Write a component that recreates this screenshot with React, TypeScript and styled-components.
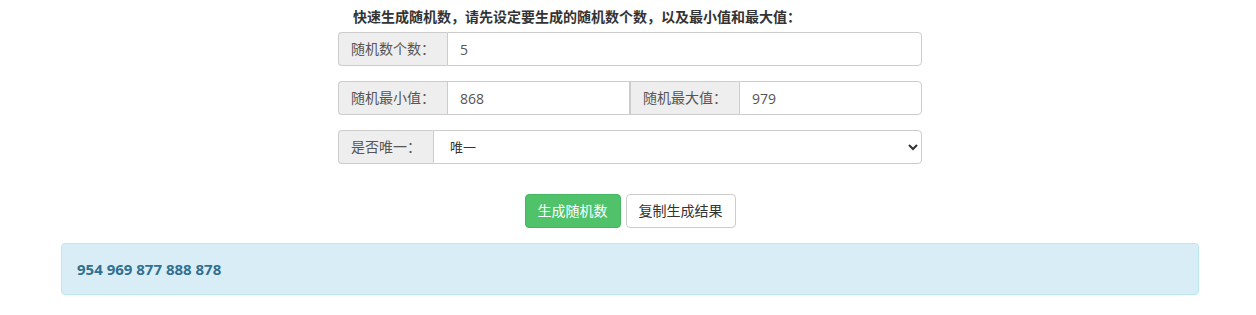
import styled, { createGlobalStyle } from "styled-components";
import { useState } from "react";

const GlobalStyle = createGlobalStyle`
    body {
        margin: 0;
        background: #fff;
        font-family: "Open Sans", "Noto Sans CJK SC", sans-serif;
        font-size: 14px;
        line-height: 20px;
        color: #333;
    }
    * { box-sizing: border-box; }
`

const Wrapper = styled.div`
    padding: 7px 0 0 4px;
`

const Page = styled.div`
    width: 1138px;
    margin: 0 auto;
`

const Form = styled.div`
    width: 584px;
    margin: 0 auto;
`

const Title = styled.div`
    font-weight: bold;
    padding-left: 15px;
    margin-bottom: 5px;
    color: #333;
`

const Group = styled.div<{$last?: boolean}>`
    display: flex;
    height: 34px;
    margin-bottom: ${props => props.$last ? "30px" : "15px"};
`

const Addon = styled.span<{$first?: boolean}>`
    display: flex;
    align-items: center;
    padding: 6px 12px;
    background-color: #eee;
    color: #555;
    border: 1px solid #ccc;
    border-right: none;
    border-radius: ${props => props.$first ? "4px 0 0 4px" : "0"};
    white-space: nowrap;
`

const Input = styled.input.attrs({type: "text"})<{$last?: boolean}>`
    flex: 1;
    min-width: 0;
    height: 34px;
    padding: 6px 12px;
    font: inherit;
    color: #555;
    border: 1px solid #ccc;
    border-radius: ${props => props.$last ? "0 4px 4px 0" : "0"};
    outline: none;
`

const Select = styled.select`
    flex: 1;
    height: 34px;
    padding: 6px 12px;
    font: inherit;
    font-size: 13px;
    color: #333;
    background: #fff;
    border: 1px solid #ccc;
    border-radius: 0 4px 4px 0;
    outline: none;
`

const Actions = styled.div`
    display: flex;
    justify-content: center;
    gap: 5px;
    margin-bottom: 15px;
`

const Button = styled.button<{$primary?: boolean}>`
    height: 34px;
    padding: 6px 12px;
    font: inherit;
    border-radius: 4px;
    cursor: pointer;
    color: ${props => props.$primary ? "#fff" : "#333"};
    background-color: ${props => props.$primary ? "#4fc26a" : "#fff"};
    border: 1px solid ${props => props.$primary ? "#45b561" : "#ccc"};
`

const Alert = styled.div`
    padding: 15px;
    background-color: #d9edf7;
    border: 1px solid #bce8f1;
    border-radius: 4px;
    color: #31708f;
    font-size: 15px;
    font-weight: bold;
`

export default function App() {
    const [count, setCount] = useState("5");
    const [min, setMin] = useState("868");
    const [max, setMax] = useState("979");
    const [unique, setUnique] = useState("1");

    return (
        <>
            <GlobalStyle />
            <Wrapper>
                <Page>
                    <Form>
                        <Title>快速生成随机数，请先设定要生成的随机数个数，以及最小值和最大值：</Title>
                        <Group>
                            <Addon $first>随机数个数：</Addon>
                            <Input $last value={count} onChange={(e) => setCount(e.target.value)} />
                        </Group>
                        <Group>
                            <Addon $first>随机最小值：</Addon>
                            <Input value={min} onChange={(e) => setMin(e.target.value)} />
                            <Addon>随机最大值：</Addon>
                            <Input $last value={max} onChange={(e) => setMax(e.target.value)} />
                        </Group>
                        <Group $last>
                            <Addon $first>是否唯一：</Addon>
                            <Select value={unique} onChange={(e) => setUnique(e.target.value)}>
                                <option value="1">唯一</option>
                                <option value="0">不唯一</option>
                            </Select>
                        </Group>
                        <Actions>
                            <Button $primary>生成随机数</Button>
                            <Button>复制生成结果</Button>
                        </Actions>
                    </Form>
                    <Alert>954 969 877 888 878</Alert>
                </Page>
            </Wrapper>
        </>
    )
}
